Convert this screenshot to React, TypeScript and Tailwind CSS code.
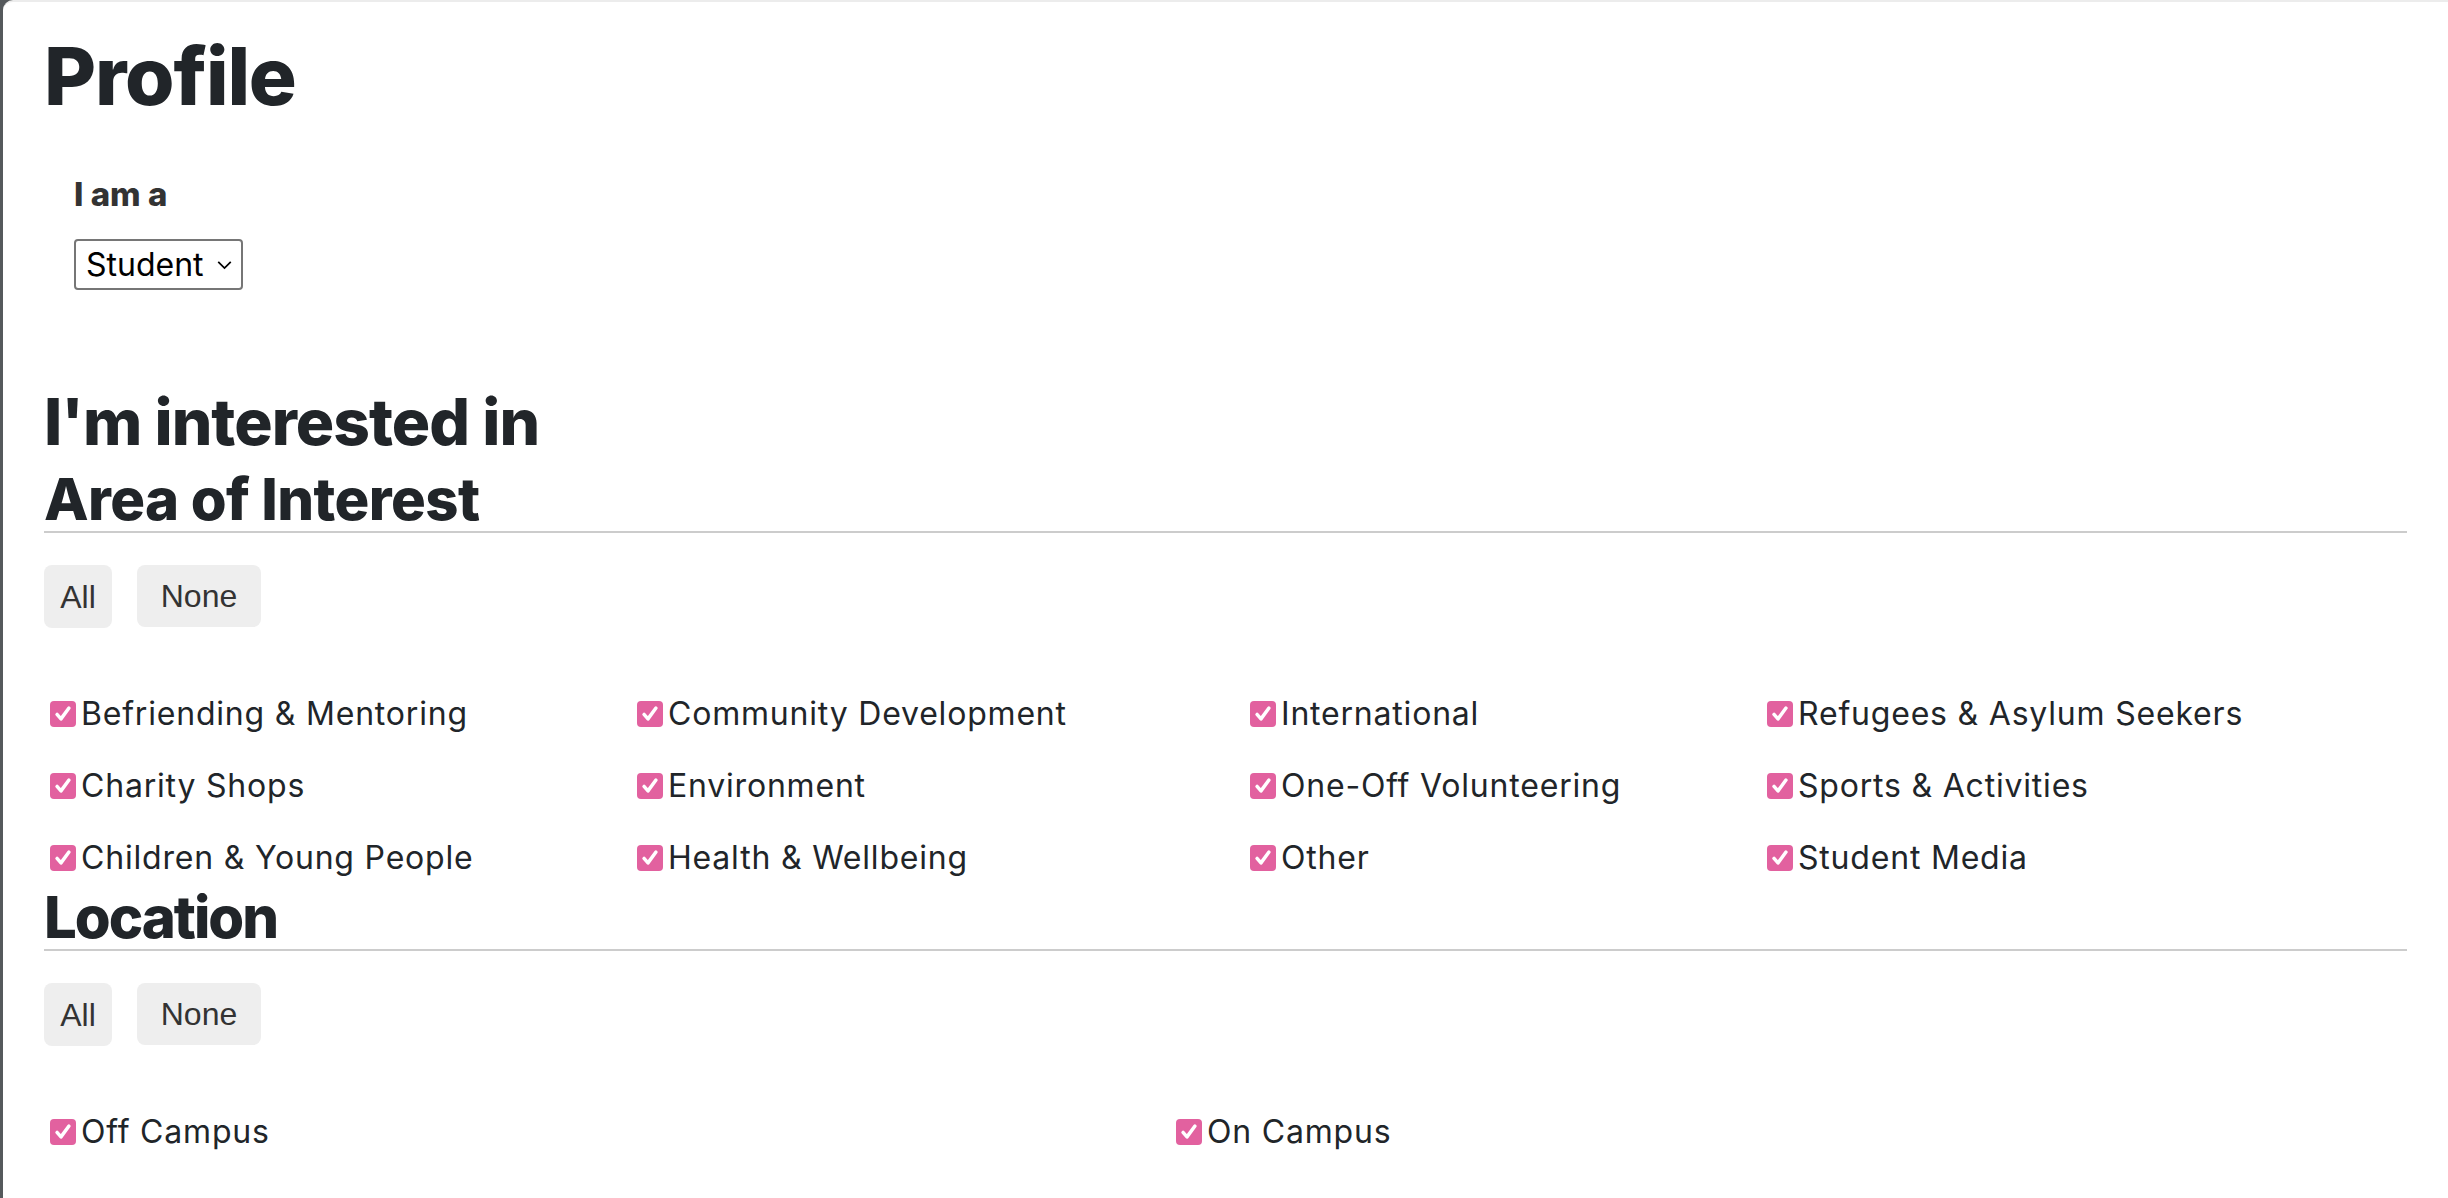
import React from "react"

const areas = [
  "Befriending & Mentoring",
  "Community Development",
  "International",
  "Refugees & Asylum Seekers",
  "Charity Shops",
  "Environment",
  "One-Off Volunteering",
  "Sports & Activities",
  "Children & Young People",
  "Health & Wellbeing",
  "Other",
  "Student Media",
]

const locations = ["Off Campus", "On Campus"]

const Check = () => (
  <span className="w-[26px] h-[26px] shrink-0 rounded-[4px] bg-[#e2619f] flex items-center justify-center">
    <svg viewBox="0 0 24 24" className="w-[22px] h-[22px]" fill="none" stroke="white" strokeWidth={3.8} strokeLinecap="round" strokeLinejoin="round">
      <path d="M5.5 12.5l4.3 4.8L18.5 5.5" />
    </svg>
  </span>
)

const Item = ({ label }: { label: string }) => (
  <label className="h-[64px] flex items-center gap-[5px] text-[32px] text-[#212529] font-['Inter',sans-serif] tracking-[0.025em] whitespace-nowrap">
    <Check />
    <span>{label}</span>
  </label>
)

const Toggles = () => (
  <div className="flex gap-[25px] mt-[32px] font-['Liberation_Sans',Arial,sans-serif] text-[32px] text-[#333]">
    <button className="w-[68px] h-[63px] rounded-[8px] bg-[#eeeeee] flex items-center justify-center">All</button>
    <button className="w-[124px] h-[62px] rounded-[8px] bg-[#eeeeee] flex items-center justify-center">None</button>
  </div>
)

export default function App() {
  return (
    <div className="min-h-screen bg-[#55595c] pl-[3px]">
      <div className="min-h-[1198px] bg-white rounded-tl-[10px] border-t-2 border-[#ececec] pl-[41px] pr-[41px] text-[#212529] font-['Inter',sans-serif]">
        <h1 className="pt-[34px] text-[80px] leading-none font-extrabold tracking-[-0.015em]">Profile</h1>

        <div className="pl-[30px] mt-[62px]">
          <div className="text-[33px] leading-none font-extrabold text-[#333] tracking-[0em]">I am a</div>
          <div className="mt-[28px] w-[169px] h-[51px] border-2 border-[#767676] rounded-[4px] flex items-center justify-between pl-[10px] pr-[9px] text-[32px] text-black">
            <span>Student</span>
            <svg viewBox="0 0 12 8" className="w-[15px] h-[10px]" fill="none" stroke="black" strokeWidth={1.4}>
              <path d="M1 1.5l5 5 5-5" />
            </svg>
          </div>
        </div>

        <h2 className="mt-[100px] text-[64px] leading-none font-extrabold tracking-[-0.015em]">I'm interested in</h2>
        <h3 className="mt-[16px] text-[58px] leading-none font-extrabold tracking-[-0.01em]">Area of Interest</h3>
        <div className="mt-[3px] h-[2px] bg-[#cccccc]" />
        <Toggles />
        <div className="mt-[54px] pl-[6px] grid grid-cols-[587px_613px_517px_1fr] gap-y-[8px]">
          {areas.map((a) => (
            <Item key={a} label={a} />
          ))}
        </div>

        <h3 className="-mt-[2px] text-[58px] leading-none font-extrabold tracking-[-0.035em]">Location</h3>
        <div className="mt-[3px] h-[2px] bg-[#cccccc]" />
        <Toggles />
        <div className="mt-[54px] pl-[6px] grid grid-cols-[1126px_1fr]">
          {locations.map((l) => (
            <Item key={l} label={l} />
          ))}
        </div>
      </div>
    </div>
  )
}
